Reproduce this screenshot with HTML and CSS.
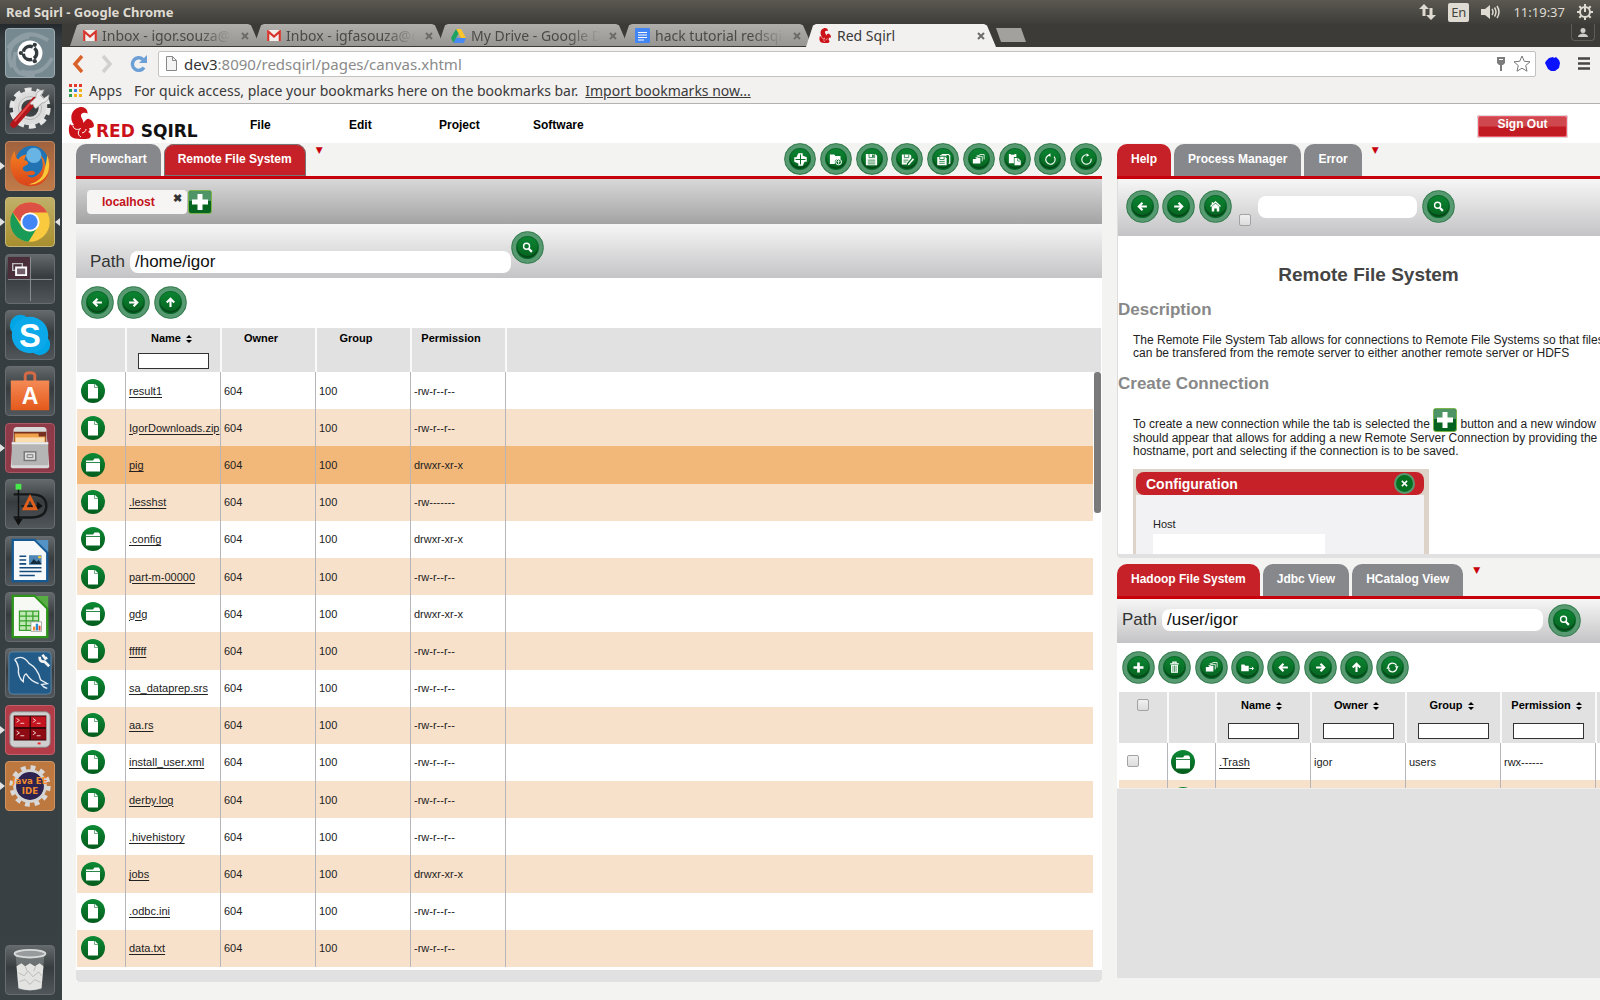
FILE: index.html
```html
<!DOCTYPE html>
<html lang="en">
<head>
    <meta charset="UTF-8">
    <meta name="viewport" content="width=device-width, initial-scale=1.0">
    <title>Red Sqirl</title>
    <link rel="stylesheet" href="styles.css">
</head>
<body>
    <!-- Shared icons -->
    <svg class="sprite" aria-hidden="true">
        <defs>
            <linearGradient id="green" x1="0" y1="0" x2="0" y2="1"><stop offset="0" stop-color="#0c8a35"/><stop offset="1" stop-color="#045c1c"/></linearGradient>
            <linearGradient id="fox" x1="0" y1="0" x2="0" y2="1"><stop offset="0" stop-color="#f58220"/><stop offset="1" stop-color="#d9431a"/></linearGradient>
            <linearGradient id="bag" x1="0" y1="0" x2="0" y2="1"><stop offset="0" stop-color="#f58a55"/><stop offset="1" stop-color="#e4591b"/></linearGradient>
        </defs>
        <symbol id="i-left" viewBox="0 0 24 24"><path d="M19 12H7M12 6l-6 6 6 6" fill="none" stroke="#fff" stroke-width="3.4"/></symbol>
        <symbol id="i-right" viewBox="0 0 24 24"><path d="M5 12h12M12 6l6 6-6 6" fill="none" stroke="#fff" stroke-width="3.4"/></symbol>
        <symbol id="i-up" viewBox="0 0 24 24"><path d="M12 19V7M6 12l6-6 6 6" fill="none" stroke="#fff" stroke-width="3.4"/></symbol>
        <symbol id="i-search" viewBox="0 0 24 24"><circle cx="10.500" cy="10" r="4.800" fill="none" stroke="#fff" stroke-width="2.200"/><path d="M14 14l5 5" stroke="#fff" stroke-width="3.400"/></symbol>
        <symbol id="i-home" viewBox="0 0 24 24"><path d="M4 12l8-7.500 8 7.500" fill="none" stroke="#fff" stroke-width="2"/><path d="M6 12.500l6-5.500 6 5.500V20h-4v-5h-4v5H6z" fill="#fff"/><path d="M6 5h2v4H6z" fill="#fff"/></symbol>
        <symbol id="i-plus" viewBox="0 0 24 24"><path d="M12 4v16M4 12h16" stroke="#fff" stroke-width="4.200"/></symbol>
        <symbol id="i-trash" viewBox="0 0 24 24"><path d="M5 6h14M9.500 5V3.500h5V5" fill="none" stroke="#fff" stroke-width="2"/><path d="M6.500 8h11v12.500h-11z" fill="#fff"/><path d="M9.500 9v10M12 9v10M14.500 9v10" stroke="#046a22" stroke-width="1"/></symbol>
        <symbol id="i-copy" viewBox="0 0 24 24"><path d="M9 6h4l1-2h7v8M7 9h3l1-2h7v8" fill="none" stroke="#fff" stroke-width="1.300"/><path d="M3 11h5l1-2h6v9.500H3z" fill="#fff"/></symbol>
        <symbol id="i-move" viewBox="0 0 24 24"><path d="M2 7h5l1.500 2H14v9H2z" fill="#fff"/><path d="M15 13.500h6M19 11l2.800 2.500L19 16" fill="none" stroke="#fff" stroke-width="1.600"/></symbol>
        <symbol id="i-refresh" viewBox="0 0 24 24"><path d="M5 11a7.200 7.200 0 0 1 13.500-2M19 13a7.200 7.200 0 0 1-13.500 2" fill="none" stroke="#fff" stroke-width="2"/><path d="M15.500 10H22l-3 4zM8.500 14H2l3-4z" fill="#fff"/></symbol>
        <symbol id="i-target" viewBox="0 0 24 24"><path d="M8.500 2h7v3.500L22 8.500v7h-3.500L15.500 22h-7v-3.500L2 15.500v-7h3.500z" fill="#fff"/><path d="M12 4v16M4 12h16" stroke="#067028" stroke-width="1.600"/></symbol>
        <symbol id="i-open" viewBox="0 0 24 24"><path d="M3 4h7l2 2.500h8V11h-6l-3 3v5H3z" fill="#fff"/><circle cx="17" cy="16" r="4.600" fill="none" stroke="#fff" stroke-width="1.600"/><path d="M17 19v-5M15 15.500l2-2 2 2" fill="none" stroke="#fff" stroke-width="1.500"/></symbol>
        <symbol id="i-save" viewBox="0 0 24 24"><path d="M3 3h15l3 3v15H3z" fill="#fff"/><path d="M8 3v6h9V3M6 13h12M6 16h12M6 19h12" fill="none" stroke="#067028" stroke-width="1.200"/><path d="M13 4h2.500v4H13z" fill="#067028"/></symbol>
        <symbol id="i-saveas" viewBox="0 0 24 24"><path d="M3 4h13l2 2v4l-7 8v2H3z" fill="#fff"/><path d="M7 4v5h7V4M5.500 13h8M5.500 16h5" fill="none" stroke="#067028" stroke-width="1.200"/><path d="M13 19l7.500-9 2 2-7.500 8.500-2.500.5z" fill="#fff"/></symbol>
        <symbol id="i-saveall" viewBox="0 0 24 24"><path d="M9 4h11l2 2v12h-2M6 6h11" fill="none" stroke="#fff" stroke-width="1.800"/><path d="M2 8h13l2 2v11H2z" fill="#fff"/><path d="M6 8v4h7V8M5 15h9M5 18h9" fill="none" stroke="#067028" stroke-width="1.200"/></symbol>
        <symbol id="i-paste" viewBox="0 0 24 24"><path d="M3 3h12v5h-4v10H3z" fill="#fff"/><path d="M6 3.500h6" stroke="#067028" stroke-width="1.500"/><path d="M12 9.500h5.500L22 14v7H12z" fill="#fff"/><path d="M17 10v4.500h4" fill="none" stroke="#067028"/></symbol>
        <symbol id="i-undo" viewBox="0 0 24 24"><path d="M12 4.500a7.500 7.500 0 1 1-7 5" fill="none" stroke="#fff" stroke-width="1.800" transform="matrix(-1 0 0 1 24 0) rotate(20 12 12)"/><path d="M12 2v5.500L7.500 5z" fill="#fff"/></symbol>
        <symbol id="i-redo" viewBox="0 0 24 24"><path d="M12 4.500a7.500 7.500 0 1 0 7.300 6" fill="none" stroke="#fff" stroke-width="1.800"/><path d="M12 2v5.500L16.500 5z" fill="#fff"/></symbol>
        <symbol id="i-x" viewBox="0 0 24 24"><path d="M5 5l14 14M19 5L5 19" stroke="#fff" stroke-width="4"/></symbol>
        <symbol id="i-file" viewBox="0 0 24 24"><circle cx="12" cy="12" r="12" fill="url(#green)"/><path d="M7 5h7l3 3v11.500H7z" fill="#fff"/><path d="M13.500 5v3.500H17" fill="none" stroke="#4c9a66" stroke-width=".8"/></symbol>
        <symbol id="i-folder" viewBox="0 0 24 24"><circle cx="12" cy="12" r="12" fill="url(#green)"/><path d="M5 7.500h7l1.500-2H18l1 2v11H5z" fill="#fff"/><path d="M4.500 9.500h15" stroke="#2c8748" stroke-width="1"/></symbol>
        <symbol id="i-add" viewBox="0 0 24 24"><rect x=".5" y=".5" width="23" height="23" rx="2.500" fill="#046420" stroke="#7cb34a"/><path d="M1 3q0-2 2-2h18q2 0 2 2v8H1z" fill="#4f9466"/><path d="M12 4v16M4 12h16" stroke="#fff" stroke-width="5"/></symbol>
        <symbol id="i-sort" viewBox="0 0 6 8"><path d="M0 3l3-3 3 3zM0 5l3 3 3-3z" fill="#000"/></symbol>
        <symbol id="i-squirrel" viewBox="0 0 26 32"><path d="M6 18C1 12 3 2 12 0c5-.5 8 3 7.500 6.500C18 5.500 15 5 13.500 7c-2 3 2 5 2 9 2-3 4-5 5.500-4 3 1 5 4 5 7-1 2-3 2-5 2 1 2 1 3-1 4 3 1 4 5 1 6.500-4 1-10 .5-14 0C0 30 0 22 2 17c1 1 2 2 4 1z" fill="#cc1219"/><path d="M5 19c1 4 5 4 7.500 2.500-3 3-3 6.500.5 8.500M14 26c3-1 4-2 4-4" fill="none" stroke="#fff" stroke-width="1"/></symbol>
        <symbol id="i-gmail" viewBox="0 0 14 11"><path d="M0 0h14v11H0z" fill="#f2eeec"/><path d="M1.200 11V1.500L7 6.500l5.800-5V11" fill="none" stroke="#d6352c" stroke-width="2.200"/></symbol>
    </svg>

    <div class="panel">
        <span class="panel-title">Red Sqirl - Google Chrome</span>
        <div class="panel-tray">
            <svg width="17" height="16" viewBox="0 0 17 16"><path d="M5 0l5 5H6.500v7h-3V5H0zM12 16l-5-5h3.500V4h3v7H17z" fill="#dfdbd2"/></svg>
            <span class="lang">En</span>
            <svg width="20" height="16" viewBox="0 0 20 16"><path d="M0 5h4l5-4v14l-5-4H0z" fill="#dfdbd2"/><path d="M11 5q2 3 0 6M13.500 3.500q3 4.500 0 9M16 2q4 6 0 12" fill="none" stroke="#dfdbd2" stroke-width="1.500"/></svg>
            <span>11:19:37</span>
            <svg width="16" height="16" viewBox="0 0 16 16"><circle cx="8" cy="8" r="5" fill="none" stroke="#dfdbd2" stroke-width="2"/><path d="M8 0v8M0 8h3M13 8h3M8 13v3M2.300 2.300l2 2M13.700 2.300l-2 2M2.300 13.700l2-2M13.700 13.700l-2-2" stroke="#dfdbd2" stroke-width="2"/></svg>
        </div>
    </div>

    <div class="desktop">
        <nav class="launcher" aria-label="Launcher">
            <div class="launcher-apps">
                <button class="app app-dash" aria-label="Dash"><svg viewBox="0 0 50 50"><path d="M2 20Q20-4 44 12M6 40Q-4 14 24 8M30 48Q2 50 10 24M48 30Q38 50 16 44" fill="none" stroke="#b9c4c8" stroke-width="4" opacity=".35"/><circle cx="25" cy="25" r="13" fill="#fff"/><circle cx="25" cy="25" r="7" fill="none" stroke="#343b3e" stroke-width="3.500" stroke-dasharray="12.600 2" stroke-dashoffset="6"/><circle cx="15.500" cy="25" r="2.200" fill="#343b3e"/><circle cx="30" cy="16.500" r="2.200" fill="#343b3e"/><circle cx="30" cy="33.500" r="2.200" fill="#343b3e"/></svg></button>
                <button class="app" aria-label="System Settings"><svg viewBox="0 0 50 50"><circle cx="25" cy="24" r="13.500" fill="none" stroke="#dcdcdc" stroke-width="9"/><circle cx="25" cy="24" r="19" fill="none" stroke="#e6e6e6" stroke-width="5" stroke-dasharray="7 4.940"/><circle cx="25" cy="24" r="12" fill="none" stroke="#b5b5b5"/><path d="M8 41l22-25" stroke="#b3171c" stroke-width="7" stroke-linecap="round"/><path d="M9 38l18-21" stroke="#e04a48" stroke-width="2"/><path d="M28 20q-1 2-3-1l6-6q0-8 9-8l-4 6 3 3 6-4q0 8-8 9l-5 5q-2 2-4-4z" fill="#e9e9e9" stroke="#888" stroke-width=".6"/></svg></button>
                <button class="app app-firefox running" aria-label="Firefox"><svg viewBox="0 0 50 50"><circle cx="27" cy="21" r="17" fill="#2173b4"/><circle cx="29" cy="14" r="8" fill="#68b4e4"/><path d="M9 9q-6 9-4 19 4 17 20 18 14 0 19-12 4-11-1-20 1 8-2 12 0-8-5-12 5 12-1 18-7 8-13 3l7-1q3-2-1-4-4 0-6 1-6-1-4-5l5-3q0-4-4-4l2-6q-6 1-8 5-3 0-4-9z" fill="url(#fox)"/><path d="M43 14q6 18-7 27-6 4-12 3 14-3 16-15 2-7 3-15z" fill="#f9c83a"/></svg></button>
                <button class="app app-chrome running focused" aria-label="Chrome"><svg viewBox="0 0 50 50"><circle cx="25" cy="25" r="20.500" fill="#f9ca3d"/><path d="M7 15A20.500 20.500 0 0 1 43 15H25a10 10 0 0 0-10 10z" fill="#dd5144"/><path d="M7 15a20.500 20.500 0 0 0 16.500 30.500L33 30a10 10 0 0 1-17 0z" fill="#1a9a57"/><circle cx="25" cy="25" r="10" fill="#fff"/><circle cx="25" cy="25" r="8" fill="#4285f4"/></svg></button>
                <button class="app" aria-label="Workspaces"><svg viewBox="0 0 50 50"><path d="M2 2h23v23H2z" fill="#4a2f3b"/><path d="M2 25.500h46M25.500 2v46" stroke="#8b9093" stroke-width="1"/><path d="M7 9h10v7H7z" fill="none" stroke="#bbb" stroke-width="1.500"/><path d="M10.500 13h10.500v8H10.500z" fill="#735f6c" stroke="#fff" stroke-width="2"/></svg></button>
                <button class="app" aria-label="Skype"><svg viewBox="0 0 50 50"><circle cx="15" cy="15" r="11" fill="#00a5e6"/><circle cx="35" cy="35" r="11" fill="#00a5e6"/><circle cx="25" cy="25" r="19" fill="#0ba9e9"/><text x="25" y="37" class="skype-s">S</text></svg></button>
                <button class="app" aria-label="Ubuntu Software"><svg viewBox="0 0 50 50"><path d="M20 17V9q0-3 5-3t5 3v8" fill="none" stroke="#d56a45" stroke-width="3"/><path d="M5 14h40v31H5z" fill="url(#bag)"/><text x="25" y="39" class="bag-a">A</text></svg></button>
                <button class="app app-files running" aria-label="Files"><svg viewBox="0 0 50 50"><path d="M8 5q1-2 3-2h28q2 0 3 2l3 39q0 2-2 2H7q-2 0-2-2z" fill="#d9d9d9"/><path d="M8 8h34v12H8z" fill="#77301f"/><path d="M9 10h25v3h7v7H9z" fill="#f0a24b"/><path d="M10 14h30v6H10z" fill="#fadcae"/><path d="M6 19h38v24H6z" fill="#b5b5b5"/><path d="M6 19h38v2H6z" fill="#eee"/><rect x="19" y="29" width="12" height="9" fill="#ddd" stroke="#777" stroke-width="1.500"/><path d="M22 32h6v3h-6z" fill="none" stroke="#777"/></svg></button>
                <button class="app" aria-label="Dia"><svg viewBox="0 0 50 50"><path d="M8 15h18q16 0 16 12T26 39H8" fill="none" stroke="#16191a" stroke-width="2.500"/><path d="M13 8v34M10 41h6l-3 5zM16 27h18M33 24l4 3-4 3z" fill="#111" stroke="#111" stroke-width="1.500"/><path d="M25 18l-6 12h12z" fill="none" stroke="#e2601d" stroke-width="3"/><path d="M10 4h6v6h-6z" fill="#48e94b"/></svg></button>
                <button class="app" aria-label="Writer"><svg viewBox="0 0 50 50"><path d="M7 3h23l13 13v30H7z" fill="#f6f8fa" stroke="#175a93" stroke-width="2.500"/><path d="M31 3h13v13z" fill="#5392c4"/><path d="M14 20h7M14 24h7M14 28h7M14 32h23M14 36h23M14 40h16" stroke="#164a7c" stroke-width="1.600"/><path d="M24 19h13v10H24z" fill="#4d86b4"/><path d="M25 28l4-5 3 3 2-2 3 4z" fill="#142b3d"/><circle cx="35" cy="21" r="1.500" fill="#f0c33c"/></svg></button>
                <button class="app" aria-label="Calc"><svg viewBox="0 0 50 50"><path d="M7 3h23l13 13v30H7z" fill="#f6f9f4" stroke="#2b9419" stroke-width="2.500"/><path d="M31 3h13v13z" fill="#57ad44"/><path d="M14 19h20v20H14z" fill="#bfe8b5"/><path d="M14 19h20v20H14zM14 24h20M14 29h20M14 34h20M21 19v20M28 19v20" fill="none" stroke="#35a02a" stroke-width="1.300"/><path d="M26 30h11v10H26z" fill="#fff" stroke="#888" stroke-width=".7"/><path d="M28 35h2.500v4H28z" fill="#f28a2b"/><path d="M31 32h2.500v7H31z" fill="#2b8bd0"/><path d="M34 34h2v5h-2z" fill="#e04a23"/></svg></button>
                <button class="app" aria-label="MySQL Workbench"><svg viewBox="0 0 50 50"><rect x="3" y="3" width="44" height="44" rx="4" fill="#235b88" stroke="#5e87a5"/><path d="M9 11q8-6 15 4 9 5 12 17l7 4-6 1q2 3 6 4M9 11q3 3 4 9-1 9 5 14 0-7 3-8 5 8 13 10" fill="none" stroke="#e6edf3" stroke-width="1.400"/><path d="M35 8q0 6 5 5l5 5M38 6l3 4 2-1" fill="none" stroke="#f3f3f3" stroke-width="2.800"/></svg></button>
                <button class="app app-term running" aria-label="Terminator"><svg viewBox="0 0 50 50"><rect x="4" y="6" width="42" height="37" rx="5" fill="#cfcfcf" stroke="#888"/><path d="M8 10h34v26H8z" fill="#3a0508"/><path d="M9 11h15.500v11H9zM26 11h15.500v11H26z" fill="#c31420"/><path d="M9 24h15.500v11H9zM26 24h15.500v11H26z" fill="#8f0b14"/><path d="M11 13l3 2-3 2M15 18h4M28 13l3 2-3 2M32 18h4M11 26l3 2-3 2M15 31h4M28 26l3 2-3 2M32 31h4" fill="none" stroke="#f1d5d7"/><path d="M33 39h3" stroke="#e22" stroke-width="2"/></svg></button>
                <button class="app app-java running" aria-label="Java EE IDE"><svg viewBox="0 0 50 50"><circle cx="25" cy="25" r="19" fill="none" stroke="#d8d8d8" stroke-width="5" stroke-dasharray="5 4.950"/><circle cx="25" cy="25" r="16" fill="#2c2350" stroke="#d4d4d4" stroke-width="3"/><text x="25" y="23" class="ide">Java EE</text><text x="25" y="33" class="ide">IDE</text></svg></button>
            </div>
            <button class="app" aria-label="Trash"><svg viewBox="0 0 50 50"><path d="M10 9h30l-3 36q-12 3-24 0z" fill="#888e90" opacity=".6"/><path d="M11 21l5-3 4 3 5-3 5 3 5-3 4 3-2 23q-12 4-24 0z" fill="#e3e3e1"/><path d="M13 28l6 3 4-5 5 6 6-5 3 4M14 37l6-2 5 5 5-5 6 3M20 21l2 5M31 21l-2 5" fill="none" stroke="#b9b9b6"/><ellipse cx="25" cy="8" rx="16" ry="4" fill="#979b9d" stroke="#d8dada" stroke-width="2"/></svg></button>
        </nav>

        <div class="browser">
            <div class="tab-strip">
                <div class="chrome-tab">
                    <svg width="14" height="11"><use href="#i-gmail"/></svg>
                    <span class="tab-name">Inbox - igor.souza@idiro</span>
                    <button class="tab-close" aria-label="Close tab"><svg viewBox="0 0 8 8"><path d="M1 1l6 6M7 1L1 7"/></svg></button>
                </div>
                <div class="chrome-tab">
                    <svg width="14" height="11"><use href="#i-gmail"/></svg>
                    <span class="tab-name">Inbox - igfasouza@gmail</span>
                    <button class="tab-close" aria-label="Close tab"><svg viewBox="0 0 8 8"><path d="M1 1l6 6M7 1L1 7"/></svg></button>
                </div>
                <div class="chrome-tab">
                    <svg width="15" height="14" viewBox="0 0 15 14"><path d="M5 0h5l5 9h-5z" fill="#fbc52c"/><path d="M5 0l2.500 4.500L2.500 14 0 9z" fill="#1ca261"/><path d="M5 9h10l-2.500 5h-10z" fill="#4688f4"/></svg>
                    <span class="tab-name">My Drive - Google Drive</span>
                    <button class="tab-close" aria-label="Close tab"><svg viewBox="0 0 8 8"><path d="M1 1l6 6M7 1L1 7"/></svg></button>
                </div>
                <div class="chrome-tab">
                    <svg width="15" height="15" viewBox="0 0 15 15"><rect width="15" height="15" rx="1" fill="#4285f4"/><path d="M3 4.500h9M3 7h9M3 9.500h9M3 12h6" stroke="#fff"/></svg>
                    <span class="tab-name">hack tutorial redsqirl</span>
                    <button class="tab-close" aria-label="Close tab"><svg viewBox="0 0 8 8"><path d="M1 1l6 6M7 1L1 7"/></svg></button>
                </div>
                <div class="chrome-tab active">
                    <svg width="12" height="15"><use href="#i-squirrel"/></svg>
                    <span class="tab-name">Red Sqirl</span>
                    <button class="tab-close" aria-label="Close tab"><svg viewBox="0 0 8 8"><path d="M1 1l6 6M7 1L1 7"/></svg></button>
                </div>
                <button class="new-tab" aria-label="New tab"></button>
                <button class="profile" aria-label="Profile"><svg width="10" height="9" viewBox="0 0 10 9"><circle cx="5" cy="2.500" r="2.500" fill="#d0cec8"/><path d="M0 9q0-3 5-3.500 5 .5 5 3.500z" fill="#d0cec8"/></svg></button>
            </div>

            <div class="toolbar">
                <button class="nav-btn" aria-label="Back"><svg width="12" height="18" viewBox="0 0 12 18"><path d="M10 1L3 9l7 8" fill="none" stroke="#d9622b" stroke-width="3.500"/></svg></button>
                <button class="nav-btn" aria-label="Forward"><svg width="12" height="18" viewBox="0 0 12 18"><path d="M2 1l7 8-7 8" fill="none" stroke="#d2d0ce" stroke-width="3.500"/></svg></button>
                <button class="nav-btn" aria-label="Reload"><svg width="17" height="18" viewBox="0 0 17 18"><path d="M14 12.500a6.300 6.300 0 1 1-1-8" fill="none" stroke="#6b9fd6" stroke-width="3.400"/><path d="M17 0v8H9z" fill="#6b9fd6"/></svg></button>
                <div class="omnibox">
                    <svg width="11" height="15" viewBox="0 0 11 15"><path d="M.5.500h6l4 4v10H.5z" fill="#f4f4f4" stroke="#888"/><path d="M6.500.500v4h4" fill="none" stroke="#888"/></svg>
                    <span class="url"><span class="url-host">dev3</span>:8090/redsqirl/pages/canvas.xhtml</span>
                    <svg width="10" height="14" viewBox="0 0 10 14"><path d="M1 0h8v6L7 8H6v6H4V8H3L1 6z" fill="#7c7c7c"/><path d="M3 2.500h4" stroke="#fff"/></svg>
                    <svg width="18" height="17" viewBox="0 0 18 17"><path d="M9 1l2.300 5.300 5.700.500-4.300 3.800 1.300 5.600L9 13.200l-5 3 1.300-5.600L1 6.800l5.700-.5z" fill="#fff" stroke="#777"/></svg>
                </div>
                <svg width="16" height="15" viewBox="0 0 16 15"><path d="M1 5l3-3 4-1 1 1 2-1 3 3 1 3-1 5-4 3H6l-3-2-2-4-1-2z" fill="#0a12ff"/></svg>
                <button class="nav-btn" aria-label="Menu"><svg width="12" height="13" viewBox="0 0 12 13"><path d="M0 1.500h12M0 6.500h12M0 11.500h12" stroke="#464646" stroke-width="2.600"/></svg></button>
            </div>

            <div class="bookmarks">
                <svg width="13" height="13" viewBox="0 0 13 13"><path d="M0 0h3v3H0zM5 0h3v3H5zM10 0h3v3h-3z" fill="#e2392b"/><path d="M0 5h3v3H0z" fill="#2c9e4b"/><path d="M5 5h3v3H5z" fill="#3f7ee8"/><path d="M10 5h3v3h-3zM5 10h3v3H5zM10 10h3v3h-3z" fill="#f2b21c"/><path d="M0 10h3v3H0z" fill="#2c9e4b"/></svg>
                <span class="apps">Apps</span>
                <span>For quick access, place your bookmarks here on the bookmarks bar.</span>
                <a href="#">Import bookmarks now...</a>
            </div>

            <div class="page">
                <header class="site-header">
                    <a href="#" class="logo">
                        <svg width="26" height="32"><use href="#i-squirrel"/></svg>
                        <span class="logo-text"><span class="logo-red">RED</span> SQIRL</span>
                    </a>
                    <nav class="menu">
                        <a href="#">File</a>
                        <a href="#">Edit</a>
                        <a href="#">Project</a>
                        <a href="#">Software</a>
                    </nav>
                    <button class="sign-out">Sign Out</button>
                </header>

                <main class="workspace">
                    <section class="left">
                        <div class="tabs">
                            <button class="tab">Flowchart</button>
                            <button class="tab selected outlined">Remote File System</button>
                            <span class="tab-more">▼</span>
                            <div class="canvas-tools">
                                <button class="round" aria-label="Center"><svg><use href="#i-target"/></svg></button>
                                <button class="round" aria-label="Open"><svg><use href="#i-open"/></svg></button>
                                <button class="round" aria-label="Save"><svg><use href="#i-save"/></svg></button>
                                <button class="round" aria-label="Save as"><svg><use href="#i-saveas"/></svg></button>
                                <button class="round" aria-label="Save all"><svg><use href="#i-saveall"/></svg></button>
                                <button class="round" aria-label="Copy"><svg><use href="#i-copy"/></svg></button>
                                <button class="round" aria-label="Paste"><svg><use href="#i-paste"/></svg></button>
                                <button class="round" aria-label="Undo"><svg><use href="#i-undo"/></svg></button>
                                <button class="round" aria-label="Redo"><svg><use href="#i-redo"/></svg></button>
                            </div>
                        </div>
                        <div class="hosts">
                            <div class="host"><span>localhost</span><button class="host-close" aria-label="Close localhost">✖</button></div>
                            <button class="add" aria-label="Add connection"><svg width="24" height="24"><use href="#i-add"/></svg></button>
                        </div>
                        <form class="path-bar path-bar-left">
                            <label for="remote-path">Path</label>
                            <input id="remote-path" class="path" type="text" value="/home/igor">
                            <button type="button" class="round" aria-label="Go"><svg><use href="#i-search"/></svg></button>
                        </form>
                        <div class="buttons">
                            <button class="round" aria-label="Back"><svg><use href="#i-left"/></svg></button>
                            <button class="round" aria-label="Forward"><svg><use href="#i-right"/></svg></button>
                            <button class="round" aria-label="Up"><svg><use href="#i-up"/></svg></button>
                        </div>
                        <table class="files files-head">
                            <colgroup><col class="c-icon"><col class="c-data"><col class="c-data"><col class="c-data"><col class="c-data"><col></colgroup>
                            <thead>
                                <tr>
                                    <th></th>
                                    <th>Name<svg class="sort"><use href="#i-sort"/></svg><input type="text" aria-label="Filter name"></th>
                                    <th>Owner<svg class="sort"></svg></th>
                                    <th>Group<svg class="sort"></svg></th>
                                    <th>Permission<svg class="sort"></svg></th>
                                    <th></th>
                                </tr>
                            </thead>
                        </table>
                        <div class="files-scroll">
                            <table class="files">
                                <colgroup><col class="c-icon"><col class="c-data"><col class="c-data"><col class="c-data"><col class="c-data"><col></colgroup>
                                <tbody>
                                    <tr><td><svg><use href="#i-file"/></svg></td><td><a href="#">result1</a></td><td>604</td><td>100</td><td>-rw-r--r--</td><td></td></tr>
                                    <tr><td><svg><use href="#i-file"/></svg></td><td><a href="#">IgorDownloads.zip</a></td><td>604</td><td>100</td><td>-rw-r--r--</td><td></td></tr>
                                    <tr class="hover"><td><svg><use href="#i-folder"/></svg></td><td><a href="#">pig</a></td><td>604</td><td>100</td><td>drwxr-xr-x</td><td></td></tr>
                                    <tr><td><svg><use href="#i-file"/></svg></td><td><a href="#">.lesshst</a></td><td>604</td><td>100</td><td>-rw-------</td><td></td></tr>
                                    <tr><td><svg><use href="#i-folder"/></svg></td><td><a href="#">.config</a></td><td>604</td><td>100</td><td>drwxr-xr-x</td><td></td></tr>
                                    <tr><td><svg><use href="#i-file"/></svg></td><td><a href="#">part-m-00000</a></td><td>604</td><td>100</td><td>-rw-r--r--</td><td></td></tr>
                                    <tr><td><svg><use href="#i-folder"/></svg></td><td><a href="#">gdg</a></td><td>604</td><td>100</td><td>drwxr-xr-x</td><td></td></tr>
                                    <tr><td><svg><use href="#i-file"/></svg></td><td><a href="#">ffffff</a></td><td>604</td><td>100</td><td>-rw-r--r--</td><td></td></tr>
                                    <tr><td><svg><use href="#i-file"/></svg></td><td><a href="#">sa_dataprep.srs</a></td><td>604</td><td>100</td><td>-rw-r--r--</td><td></td></tr>
                                    <tr><td><svg><use href="#i-file"/></svg></td><td><a href="#">aa.rs</a></td><td>604</td><td>100</td><td>-rw-r--r--</td><td></td></tr>
                                    <tr><td><svg><use href="#i-file"/></svg></td><td><a href="#">install_user.xml</a></td><td>604</td><td>100</td><td>-rw-r--r--</td><td></td></tr>
                                    <tr><td><svg><use href="#i-file"/></svg></td><td><a href="#">derby.log</a></td><td>604</td><td>100</td><td>-rw-r--r--</td><td></td></tr>
                                    <tr><td><svg><use href="#i-file"/></svg></td><td><a href="#">.hivehistory</a></td><td>604</td><td>100</td><td>-rw-r--r--</td><td></td></tr>
                                    <tr><td><svg><use href="#i-folder"/></svg></td><td><a href="#">jobs</a></td><td>604</td><td>100</td><td>drwxr-xr-x</td><td></td></tr>
                                    <tr><td><svg><use href="#i-file"/></svg></td><td><a href="#">.odbc.ini</a></td><td>604</td><td>100</td><td>-rw-r--r--</td><td></td></tr>
                                    <tr><td><svg><use href="#i-file"/></svg></td><td><a href="#">data.txt</a></td><td>604</td><td>100</td><td>-rw-r--r--</td><td></td></tr>
                                </tbody>
                            </table>
                            <div class="scrollbar"></div>
                        </div>
                        <div class="panel-foot"></div>
                    </section>

                    <div class="right">
                        <section class="box">
                            <div class="tabs">
                                <button class="tab selected">Help</button>
                                <button class="tab">Process Manager</button>
                                <button class="tab">Error</button>
                                <span class="tab-more">▼</span>
                            </div>
                            <form class="help-bar">
                                <div class="help-nav">
                                    <button type="button" class="round" aria-label="Back"><svg><use href="#i-left"/></svg></button>
                                    <button type="button" class="round" aria-label="Forward"><svg><use href="#i-right"/></svg></button>
                                    <button type="button" class="round" aria-label="Home"><svg><use href="#i-home"/></svg></button>
                                </div>
                                <input type="checkbox" class="check help-check" aria-label="Search all help">
                                <input type="text" class="path help-search" aria-label="Search help">
                                <button type="button" class="round" aria-label="Search"><svg><use href="#i-search"/></svg></button>
                            </form>
                            <article class="help">
                                <div class="help-inner">
                                    <h1>Remote File System</h1>
                                    <h2>Description</h2>
                                    <p>The Remote File System Tab allows for connections to Remote File Systems so that files can be transfered from the remote server to either another remote server or HDFS</p>
                                    <h2>Create Connection</h2>
                                    <p>To create a new connection while the tab is selected the <svg class="inline-add"><use href="#i-add"/></svg> button and a new window should appear that allows for adding a new Remote Server Connection by providing the hostname, port and selecting if the connection is to be saved.</p>
                                    <div class="shot">
                                        <div class="shot-head">Configuration<span class="shot-close"><svg><use href="#i-x"/></svg></span></div>
                                        <div class="shot-body"><label for="host">Host</label><input id="host" type="text"></div>
                                    </div>
                                </div>
                            </article>
                            <div class="box-foot"></div>
                        </section>

                        <section class="box">
                            <div class="tabs">
                                <button class="tab selected">Hadoop File System</button>
                                <button class="tab">Jdbc View</button>
                                <button class="tab">HCatalog View</button>
                                <span class="tab-more">▼</span>
                            </div>
                            <form class="path-bar path-bar-right">
                                <label for="hdfs-path">Path</label>
                                <input id="hdfs-path" class="path" type="text" value="/user/igor">
                                <button type="button" class="round" aria-label="Go"><svg><use href="#i-search"/></svg></button>
                            </form>
                            <div class="buttons">
                                <button class="round" aria-label="New folder"><svg><use href="#i-plus"/></svg></button>
                                <button class="round" aria-label="Delete"><svg><use href="#i-trash"/></svg></button>
                                <button class="round" aria-label="Copy"><svg><use href="#i-copy"/></svg></button>
                                <button class="round" aria-label="Move"><svg><use href="#i-move"/></svg></button>
                                <button class="round" aria-label="Back"><svg><use href="#i-left"/></svg></button>
                                <button class="round" aria-label="Forward"><svg><use href="#i-right"/></svg></button>
                                <button class="round" aria-label="Up"><svg><use href="#i-up"/></svg></button>
                                <button class="round" aria-label="Refresh"><svg><use href="#i-refresh"/></svg></button>
                            </div>
                            <div class="hdfs-scroll">
                                <table class="files hdfs">
                                    <colgroup><col class="c-icon"><col class="c-icon"><col class="c-data"><col class="c-data"><col class="c-data"><col class="c-data"><col></colgroup>
                                    <thead>
                                        <tr>
                                            <th class="th-check"><input type="checkbox" class="check" aria-label="Select all"></th>
                                            <th></th>
                                            <th>Name<svg class="sort"><use href="#i-sort"/></svg><input type="text" aria-label="Filter name"></th>
                                            <th>Owner<svg class="sort"><use href="#i-sort"/></svg><input type="text" aria-label="Filter owner"></th>
                                            <th>Group<svg class="sort"><use href="#i-sort"/></svg><input type="text" aria-label="Filter group"></th>
                                            <th>Permission<svg class="sort"><use href="#i-sort"/></svg><input type="text" aria-label="Filter permission"></th>
                                            <th></th>
                                        </tr>
                                    </thead>
                                    <tbody>
                                        <tr><td class="td-check"><input type="checkbox" class="check" aria-label="Select .Trash"></td><td><svg><use href="#i-folder"/></svg></td><td><a href="#">.Trash</a></td><td>igor</td><td>users</td><td>rwx------</td><td></td></tr>
                                        <tr><td></td><td><svg><use href="#i-folder"/></svg></td><td></td><td></td><td></td><td></td><td></td></tr>
                                    </tbody>
                                </table>
                            </div>
                            <div class="hdfs-rest"></div>
                        </section>
                    </div>
                </main>
            </div>
        </div>
    </div>
</body>
</html>
```
FILE: styles.css
```css
/* General Reset */
* {
    margin: 0;
    padding: 0;
    box-sizing: border-box;
}

body {
    height: 100vh;
    display: flex;
    flex-direction: column;
    overflow: hidden;
    background-color: #f3f3f2;
    color: #222;
    font-family: "Liberation Sans", Arial, sans-serif;
    font-size: 12px;
}

button {
    border: 0;
    background: none;
    font: inherit;
    color: inherit;
}

svg {
    display: block;
    flex: none;
}

.sprite {
    position: absolute;
    width: 0;
    height: 0;
}

/* Desktop panel */
.panel {
    height: 24px;
    flex: none;
    display: flex;
    align-items: center;
    justify-content: space-between;
    padding: 0 7px 0 6px;
    background: linear-gradient(#5a5850, #3e3d39);
    color: #dfdbd2;
    font-family: "Noto Sans", sans-serif;
    font-size: 13px;
}

.panel-title {
    font-weight: bold;
}

.panel-tray {
    display: flex;
    align-items: center;
    gap: 12px;
}

.lang {
    padding: 0 3px;
    border-radius: 2px;
    background: #dfdbd2;
    color: #45443f;
    line-height: 19px;
}

.desktop {
    flex: 1;
    display: flex;
    min-height: 0;
}

/* Launcher */
.launcher {
    width: 62px;
    flex: none;
    display: flex;
    flex-direction: column;
    justify-content: space-between;
    padding: 4px 6px 5px 5px;
    background: linear-gradient(#23292c, #353c40 16px, #3a4144);
}

.launcher-apps {
    height: 81%;
    display: flex;
    flex-direction: column;
    justify-content: space-between;
}

.app {
    position: relative;
    width: 50px;
    height: 50px;
    border: 1px solid #666c6f;
    border-radius: 4px;
    background: linear-gradient(#64696c, #373c3f 45%, #50565a);
}

.app svg {
    width: 48px;
    height: 48px;
}

.app-dash { background: #768990; border-color: #9aaab0; }
.app-firefox { background: linear-gradient(#a0623e, #c07a48); border-color: #c38a63; }
.app-chrome { background: linear-gradient(#c0b069, #a88e2e); border-color: #c6b878; }
.app-files { background: #8f3a48; border-color: #a85866; }
.app-term { background: #b23c48; border-color: #c35f69; }
.app-java { background: #bd7840; border-color: #cf9464; }

/* Running and focused markers on the launcher edges */
.running::before,
.focused::after {
    content: "";
    position: absolute;
    top: 20px;
    border: 4px solid transparent;
}

.running::before {
    left: -6px;
    border-left: 5px solid #e2e2e2;
    border-right: 0;
}

.focused::after {
    right: -6px;
    border-right: 5px solid #e2e2e2;
    border-left: 0;
}

.skype-s {
    font-size: 34px;
    font-weight: bold;
    fill: #fff;
    text-anchor: middle;
}

.bag-a {
    font-size: 24px;
    font-weight: bold;
    fill: #fff;
    text-anchor: middle;
}

.ide {
    font-family: "DejaVu Sans", sans-serif;
    font-size: 9px;
    font-weight: bold;
    fill: #f08a2c;
    text-anchor: middle;
}

/* Browser */
.browser {
    flex: 1;
    min-width: 0;
    display: flex;
    flex-direction: column;
    font-family: "Noto Sans", sans-serif;
}

.tab-strip {
    height: 23px;
    flex: none;
    display: flex;
    padding: 0 5px 0 8px;
    background: #3c3b37;
}

.chrome-tab {
    position: relative;
    z-index: 0;
    width: 190px;
    display: flex;
    align-items: center;
    gap: 5px;
    margin-right: -6px;
    padding: 0 11px 0 13px;
    color: #4c4a46;
    font-size: 14px;
}

.chrome-tab::before {
    content: "";
    position: absolute;
    z-index: -1;
    inset: 0 0 1px;
    background: linear-gradient(#b0aeab, #989693);
    clip-path: polygon(0 100%, 7px 6%, 10px 0, 178px 0, 181px 6%, 100% 100%);
}

.chrome-tab.active {
    z-index: 1;
    gap: 6px;
    color: #3a3a3a;
}

.chrome-tab.active::before {
    inset: 0;
    background: #f2f1f0;
}

.tab-name {
    flex: 1;
    overflow: hidden;
    white-space: nowrap;
    mask-image: linear-gradient(to right, #000 75%, transparent);
}

.active .tab-name {
    mask-image: none;
}

.tab-close svg {
    width: 8px;
    height: 8px;
    margin-left: 4px;
    stroke: #6e6c69;
    stroke-width: 2;
}

.new-tab {
    width: 30px;
    height: 14px;
    margin: 4px 0 0 6px;
    background: #a3a19e;
    clip-path: polygon(0 0, 25px 0, 100% 100%, 5px 100%);
}

.profile {
    display: flex;
    justify-content: center;
    width: 24px;
    height: 17px;
    margin-left: auto;
    padding-top: 4px;
    border: 1px solid #5e5d58;
    border-top: 0;
    border-radius: 0 0 4px 4px;
}

.toolbar {
    height: 31px;
    flex: none;
    display: flex;
    align-items: center;
    gap: 17px;
    padding: 2px 10px 0;
    background: #f2f1f0;
}

.omnibox {
    flex: 1;
    height: 26px;
    display: flex;
    align-items: center;
    gap: 7px;
    margin: 0 -8px 0 -6px;
    padding: 0 4px 0 7px;
    border: 1px solid #c4c2c0;
    border-radius: 2px;
    background: #fff;
}

.url {
    flex: 1;
    color: #8a8a8a;
    font-size: 15px;
}

.url-host {
    color: #333;
}

.bookmarks {
    height: 26px;
    flex: none;
    display: flex;
    align-items: center;
    gap: 7px;
    padding: 0 7px;
    border-bottom: 1px solid #b2b2b2;
    background: #f2f1f0;
    color: #3a3a3a;
    font-size: 14px;
}

.apps {
    margin-right: 5px;
}

.bookmarks a {
    color: inherit;
}

/* Page */
.page {
    flex: 1;
    min-height: 0;
    display: flex;
    flex-direction: column;
    background: #f3f3f2;
    font-family: "Liberation Sans", Arial, sans-serif;
}

.site-header {
    height: 39px;
    flex: none;
    display: flex;
    padding: 3px 32px 0 6px;
    background: #fff;
}

.logo {
    display: flex;
    gap: 2px;
    width: 182px;
    text-decoration: none;
}

.logo-text {
    color: #111;
    font-family: "DejaVu Sans", sans-serif;
    font-size: 17px;
    font-weight: bold;
    line-height: 20px;
    padding-top: 14px;
    white-space: nowrap;
}

.logo-red {
    color: #cc1219;
}

.menu {
    flex: 1;
    display: flex;
    align-items: flex-start;
}

.menu a {
    min-width: 90px;
    margin-right: 9px;
    color: #000;
    font-weight: bold;
    line-height: 14px;
    padding-top: 11px;
    text-decoration: none;
}

.menu a:nth-child(2) {
    margin-right: 0;
}

.menu a:nth-child(3) {
    margin-right: 4px;
}

.sign-out {
    width: 91px;
    height: 23px;
    margin-top: 8px;
    border: 2px solid #ee5a6c;
    border-radius: 3px;
    outline: 1px solid #ddd;
    outline-offset: -1px;
    background: linear-gradient(#cf484d 45%, #c21a22 55%);
    color: #fff;
    font-weight: bold;
    line-height: 15px;
    padding-bottom: 4px;
}

.workspace {
    flex: 1;
    min-height: 0;
    display: flex;
    gap: 15px;
    padding: 1px 0 18px 14px;
}

.left {
    flex: 1026;
    min-width: 0;
    display: flex;
    flex-direction: column;
    background: #fff;
}

.right {
    flex: 483;
    min-width: 0;
    display: flex;
    flex-direction: column;
    gap: 6px;
    padding-bottom: 4px;
}

.box {
    flex: 1;
    min-height: 0;
    display: flex;
    flex-direction: column;
}

/* Tabs */
.tabs {
    height: 35px;
    flex: none;
    display: flex;
    gap: 3px;
    border-bottom: 3px solid #c8000a;
    background: #f3f3f2;
}

.tab {
    padding: 0 14px 2px;
    border-radius: 10px 10px 0 0;
    background: #87888c;
    color: #fff;
    font-weight: bold;
}

.tab.selected {
    background: #c62128;
}

.tab.outlined {
    outline: 1px solid #777;
    outline-offset: -1px;
}

.tab-more {
    margin-left: 7px;
    padding-top: 1px;
    color: #c8000a;
    font-family: "DejaVu Sans", sans-serif;
    font-size: 9px;
}

.canvas-tools {
    width: 318px;
    display: flex;
    justify-content: space-between;
    margin: -1px 0 1px auto;
}

/* Round green buttons */
.round {
    display: inline-flex;
    align-items: center;
    justify-content: center;
    width: 33px;
    height: 33px;
    flex: none;
    vertical-align: top;
    border: 1px solid #3f8257;
    border-radius: 50%;
    background: linear-gradient(#0d8d36, #045a1b);
    box-shadow: inset 0 0 0 4px #579970, inset 0 0 0 5px #0b6b2a, inset 0 -2px 0 5px #06481a;
}

.round svg {
    width: 15px;
    height: 15px;
}

.canvas-tools .round {
    width: 32px;
    height: 32px;
}

/* Connections */
.hosts {
    height: 45px;
    flex: none;
    display: flex;
    align-items: center;
    gap: 1px;
    padding: 0 11px;
    background: linear-gradient(#d8d8d8, #a3a3a3);
}

.host {
    display: flex;
    justify-content: space-between;
    width: 100px;
    height: 24px;
    padding: 0 5px 0 15px;
    border-radius: 4px;
    background: #f6f5f4;
    color: #c4121a;
    font-weight: bold;
    line-height: 24px;
}

.host-close {
    align-self: flex-start;
    color: #333;
    font-size: 11px;
    line-height: 16px;
}

/* Path bars */
.path-bar {
    flex: none;
    display: flex;
    background: linear-gradient(#f6f6f6, #c4c4c6);
    color: #333;
    font-size: 17px;
    line-height: 22px;
}

.path {
    height: 22px;
    padding: 0 5px;
    border: 0;
    border-radius: 8px;
    background: #fff;
    color: #111;
    font-family: inherit;
    font-size: 17px;
}

.path-bar-left {
    height: 54px;
    align-items: flex-end;
    padding: 0 14px 5px;
}

.path-bar-left .path {
    width: 381px;
    margin-left: 5px;
}

.path-bar-left .round {
    align-self: flex-start;
    margin-top: 7px;
}

.path-bar-right {
    height: 44px;
    align-items: center;
    padding: 0 5px 2px;
}

.path-bar-right .path {
    width: 381px;
    margin: 0 5px;
}

.buttons {
    height: 50px;
    flex: none;
    padding: 8px 5px;
    background: #fff;
}

.box .buttons {
    height: 49px;
}

/* File tables */
.files {
    width: 100%;
    table-layout: fixed;
    border-spacing: 0;
    font-size: 11px;
}

.files-head {
    width: calc(100% - 2px);
    margin-left: 1px;
    flex: none;
}

.c-icon { width: 48px; }
.c-data { width: 95px; }

th {
    height: 44px;
    padding-top: 3px;
    border-left: 2px solid #fafafa;
    background: #e1e1e1;
    color: #000;
    line-height: 14px;
    vertical-align: top;
}

th:first-child {
    border-left: 0;
}

th input[type="text"] {
    display: block;
    width: 71px;
    height: 16px;
    margin: 8px auto 0;
    border: 1px solid #333;
    background: #fff;
}

.sort {
    display: inline-block;
    width: 6px;
    height: 8px;
    margin: 0 4px 0 5px;
    vertical-align: middle;
}

td {
    height: 37px;
    padding-left: 3px;
    border-left: 1px solid #b6b6ba;
    white-space: nowrap;
    vertical-align: middle;
}

td:first-child {
    padding-left: 4px;
    border-left: 0;
}

td svg {
    width: 24px;
    height: 24px;
}

td a {
    color: inherit;
    text-underline-offset: 2px;
}

tbody tr {
    background: #fff;
}

tbody tr:nth-child(even) {
    background: #f8e1ca;
}

tbody tr.hover {
    background: #f2b87a;
}

.files-scroll {
    flex: 1;
    min-height: 0;
    display: flex;
    gap: 1px;
    padding: 0 1px 3px;
    overflow: hidden;
}

.files-scroll .files {
    flex: 1;
    height: 100%;
}

.scrollbar {
    width: 7px;
    height: 141px;
    border-radius: 3px;
    background: #7a7a7a;
}

.panel-foot {
    height: 12px;
    flex: none;
    border-radius: 0 0 4px 4px;
    background: #e1e1e1;
}

/* Help */
.help-bar {
    height: 57px;
    flex: none;
    display: flex;
    align-items: center;
    padding: 0 8px 2px;
    border-left: 1px solid #ddd;
    background: linear-gradient(#f6f6f6, #c4c4c6);
}

.check {
    appearance: none;
    width: 12px;
    height: 12px;
    border: 1px solid #a3a3a3;
    border-radius: 2px;
    background: linear-gradient(#f0f0f0, #dcdcdc);
}

.help-check {
    margin: 26px 7px 0;
}

.help-search {
    width: 159px;
    margin-right: 5px;
}

.help {
    flex: 1;
    min-height: 0;
    overflow: hidden;
    border-left: 1px solid #ddd;
    background: #fff;
}

.help-inner {
    margin-right: -19px;
    padding-top: 28px;
}

.help h1 {
    color: #444;
    font-size: 19px;
    line-height: 22px;
    text-align: center;
}

.help h2 {
    margin-top: 14px;
    color: #888;
    font-size: 17px;
    line-height: 20px;
}

.help p {
    margin: 14px 10px 0 15px;
    line-height: 13px;
}

.inline-add {
    display: inline-block;
    width: 24px;
    height: 24px;
    vertical-align: -4px;
}

/* Dialog pictured in the help text */
.shot {
    width: 296px;
    height: 240px;
    margin: 11px 0 0 15px;
    padding: 3px 5px 0 3px;
    border: 0;
    background: #ddd3c9;
}

.shot-head {
    display: flex;
    align-items: center;
    justify-content: space-between;
    height: 23px;
    padding: 0 9px 0 10px;
    border-radius: 8px;
    background: #c62128;
    color: #fff;
    font-size: 14px;
    font-weight: bold;
}

.shot-close {
    display: flex;
    align-items: center;
    justify-content: center;
    width: 21px;
    height: 21px;
    border: 2px solid #579970;
    border-radius: 50%;
    background: #04701f;
}

.shot-close svg {
    width: 9px;
    height: 9px;
}

.shot-body {
    height: 200px;
    padding: 23px 17px;
    background: #f2f2f5;
    font-size: 11px;
}

.shot-body input {
    display: block;
    width: 172px;
    height: 22px;
    margin-top: 4px;
    border: 0;
    background: #fff;
}

.box-foot {
    height: 4px;
    flex: none;
    border-radius: 0 0 0 4px;
    background: #e1e1e1;
}

/* Hadoop file system */
.hdfs-scroll {
    height: 96px;
    flex: none;
    overflow: hidden;
    padding-left: 2px;
    background: #fff;
}

.hdfs {
    width: 600px;
}

.hdfs th {
    height: 51px;
    padding-top: 6px;
}

.hdfs th input[type="text"] {
    margin-top: 11px;
}

.hdfs .th-check {
    padding-top: 7px;
    text-align: center;
}

.hdfs .td-check {
    padding-left: 8px;
}

.hdfs-rest {
    flex: 1;
    border-top: 1px solid #eee;
    background: #e1e1e1;
}
```
